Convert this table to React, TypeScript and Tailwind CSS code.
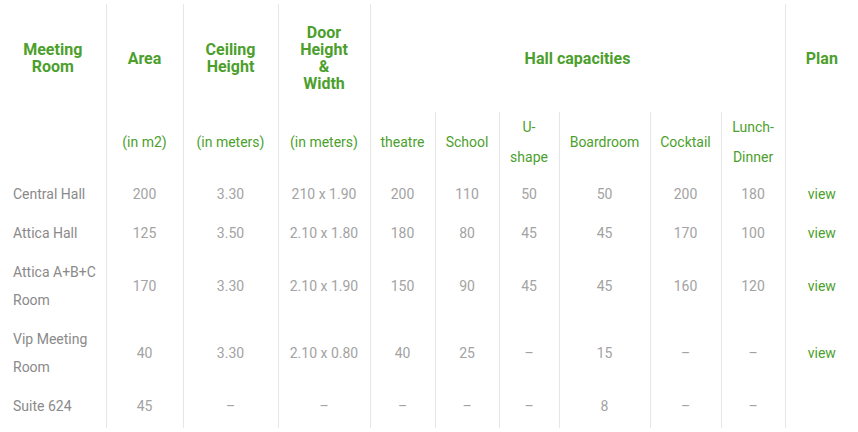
const rows = [
  { name: "Central Hall", area: "200", ceil: "3.30", door: "210 x 1.90", v: ["200", "110", "50", "50", "200", "180"], plan: true },
  { name: "Attica Hall", area: "125", ceil: "3.50", door: "2.10 x 1.80", v: ["180", "80", "45", "45", "170", "100"], plan: true },
  { name: "Attica A+B+C Room", area: "170", ceil: "3.30", door: "2.10 x 1.90", v: ["150", "90", "45", "45", "160", "120"], plan: true },
  { name: "Vip Meeting Room", area: "40", ceil: "3.30", door: "2.10 x 0.80", v: ["40", "25", "–", "15", "–", "–"], plan: true },
  { name: "Suite 624", area: "45", ceil: "–", door: "–", v: ["–", "–", "–", "8", "–", "–"], plan: false },
];

const widths = [106, 77, 95, 92, 65, 64, 60, 91, 71, 64, 73];

const App = () => {
  return (
    <main className="w-[858px] pt-1 bg-white font-['Roboto',sans-serif]">
      <table className="table-fixed border-collapse w-[858px]">
        <colgroup>
          {widths.map((w, i) => (
            <col key={i} style={{ width: w }} />
          ))}
        </colgroup>
        <thead className="text-[#4c9f2d]">
          <tr className="h-[108px] text-base font-bold leading-[17px]">
            <th className="px-2 text-center align-middle">
              Meeting
              <br />
              Room
            </th>
            <th className="border-l border-[#e6e6e6]">Area</th>
            <th className="border-l border-[#e6e6e6]">
              Ceiling
              <br />
              Height
            </th>
            <th className="border-l border-[#e6e6e6]">
              Door
              <br />
              Height
              <br />
              &amp;
              <br />
              Width
            </th>
            <th colSpan={6} className="border-l border-[#e6e6e6]">
              Hall capacities
            </th>
            <th className="border-l border-[#e6e6e6]">Plan</th>
          </tr>
          <tr className="h-[61px] text-sm font-normal leading-[30px]">
            <th className="font-normal pb-[2px]"></th>
            <th className="font-normal pb-[2px] border-l border-[#e6e6e6]">(in m2)</th>
            <th className="font-normal pb-[2px] border-l border-[#e6e6e6]">(in meters)</th>
            <th className="font-normal pb-[2px] border-l border-[#e6e6e6]">(in meters)</th>
            <th className="font-normal pb-[2px] border-l border-[#e6e6e6]">theatre</th>
            <th className="font-normal pb-[2px] border-l border-[#e6e6e6]">School</th>
            <th className="font-normal pb-[2px] border-l border-[#e6e6e6]">
              U-
              <br />
              shape
            </th>
            <th className="font-normal pb-[2px] border-l border-[#e6e6e6]">Boardroom</th>
            <th className="font-normal pb-[2px] border-l border-[#e6e6e6]">Cocktail</th>
            <th className="font-normal pb-[2px] border-l border-[#e6e6e6]">
              Lunch-
              <br />
              Dinner
            </th>
            <th className="font-normal pb-[2px] border-l border-[#e6e6e6]"></th>
          </tr>
        </thead>
        <tbody className="text-sm leading-[28px] text-[#a3a3a3]">
          {rows.map((r, i) => (
            <tr key={i}>
              <td className="pl-[13px] pr-2 py-[5.5px] text-left text-[#8a8a8a]">{r.name}</td>
              <td className="py-[5.5px] text-center border-l border-[#e6e6e6]">{r.area}</td>
              <td className="py-[5.5px] text-center border-l border-[#e6e6e6]">{r.ceil}</td>
              <td className="py-[5.5px] text-center border-l border-[#e6e6e6]">{r.door}</td>
              {r.v.map((val, j) => (
                <td key={j} className="py-[5.5px] text-center border-l border-[#e6e6e6]">
                  {val}
                </td>
              ))}
              <td className="py-[5.5px] text-center border-l border-[#e6e6e6] text-[#4c9f2d]">
                {r.plan ? "view" : ""}
              </td>
            </tr>
          ))}
          <tr className="h-[3px]">
            <td></td>
            {widths.slice(1).map((_, k) => (
              <td key={k} className="border-l border-[#e6e6e6]"></td>
            ))}
          </tr>
        </tbody>
      </table>
    </main>
  );
};

export default App;
